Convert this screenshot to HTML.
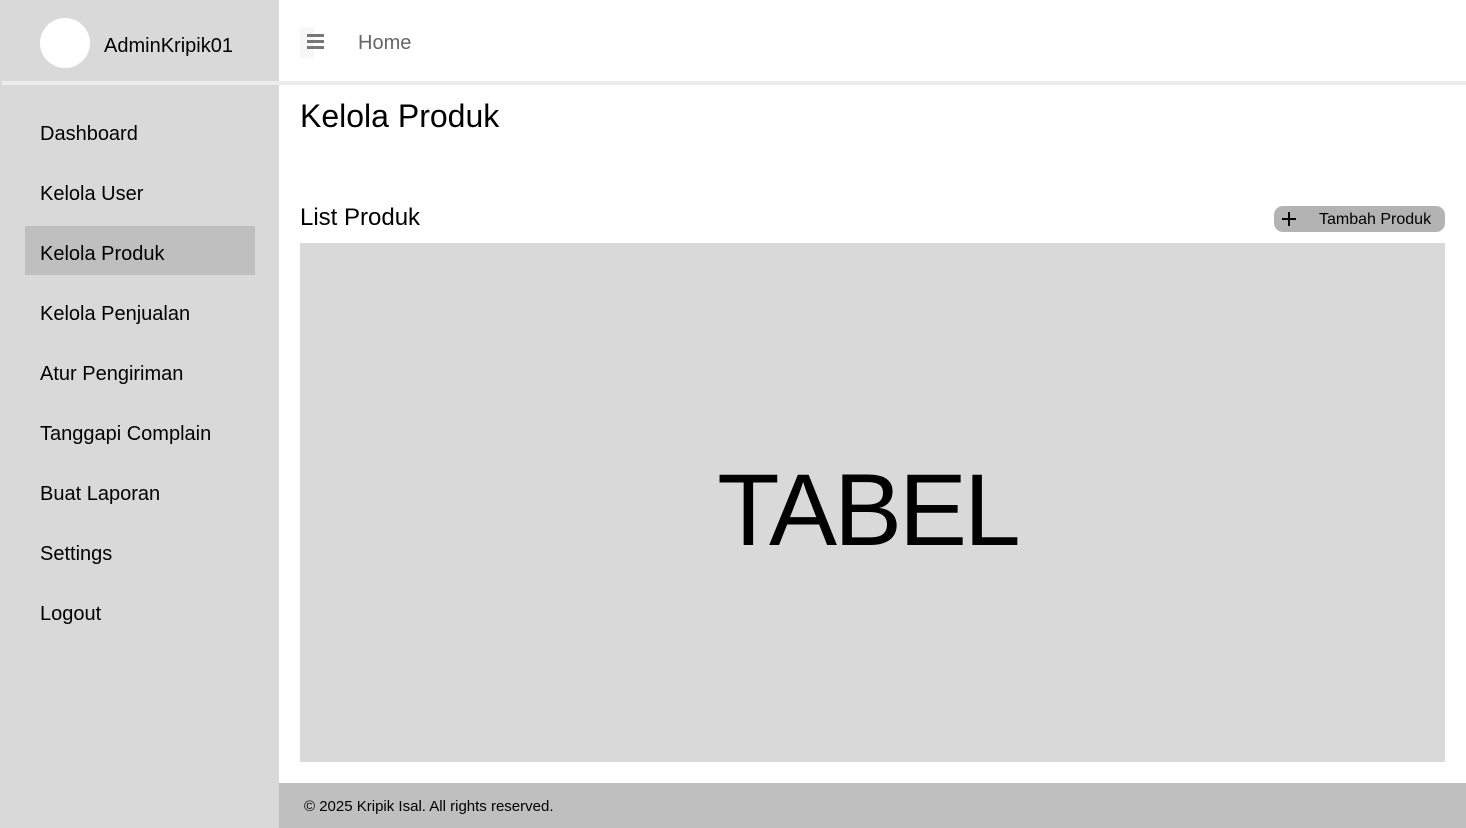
<!DOCTYPE html>
<html><head><style>
*{margin:0;padding:0;box-sizing:border-box}
body{width:1466px;height:828px;position:relative;background:#fff;font-family:"Liberation Sans",sans-serif;color:#000;overflow:hidden}
.sb{position:absolute;left:0;top:0;width:279px;height:828px;background:#d9d9d9}
.av{position:absolute;left:40px;top:18px;width:50px;height:50px;border-radius:50%;background:#fff}
.name{position:absolute;left:104px;top:35px;font-size:20px}
.sep{position:absolute;left:2px;top:81px;width:1464px;height:4px;background:#ececec}
.item{position:absolute;left:40px;font-size:20px}
.act{position:absolute;left:25px;top:226px;width:230px;height:49px;background:#bfbfbf}
.ham{position:absolute;left:300px;top:27px;width:14px;height:31px;background:#f7f7f7}
.ham i{position:absolute;left:7px;width:17px;height:3px;background:#777}
.home{position:absolute;left:358px;top:32px;font-size:20px;color:#666}
h1{position:absolute;left:300px;top:98px;font-size:32px;font-weight:normal}
.lp{position:absolute;left:300px;top:204px;font-size:24px}
.btn{position:absolute;left:1274px;top:206px;width:171px;height:26px;border-radius:9px;background:#b3b3b3;font-size:16px}
.btn span{position:absolute;left:45px;top:5px}
.tab{position:absolute;left:300px;top:243px;width:1145px;height:519px;background:#d9d9d9;text-align:center;font-size:102px;letter-spacing:-3px;line-height:519px;padding:8px 10px 0 0}
.ft{position:absolute;left:279px;top:783px;width:1187px;height:45px;background:#bfbfbf;font-size:15px;padding:15px 0 0 25px}
</style></head><body>
<div class="sb"></div>
<div class="av"></div>
<div class="name">AdminKripik01</div>
<div class="sep"></div>
<div class="act"></div>
<div class="item" style="top:123px">Dashboard</div>
<div class="item" style="top:183px">Kelola User</div>
<div class="item" style="top:243px">Kelola Produk</div>
<div class="item" style="top:303px">Kelola Penjualan</div>
<div class="item" style="top:363px">Atur Pengiriman</div>
<div class="item" style="top:423px">Tanggapi Complain</div>
<div class="item" style="top:483px">Buat Laporan</div>
<div class="item" style="top:543px">Settings</div>
<div class="item" style="top:603px">Logout</div>
<div class="ham"><i style="top:7px"></i><i style="top:13px"></i><i style="top:19px"></i></div>
<div class="home">Home</div>
<h1>Kelola Produk</h1>
<div class="lp">List Produk</div>
<div class="btn"><svg style="position:absolute;left:8px;top:6px" width="14" height="14"><path d="M7 0V14M0 7H14" stroke="#000" stroke-width="2"/></svg><span>Tambah Produk</span></div>
<div class="tab">TABEL</div>
<div class="ft">© 2025 Kripik Isal. All rights reserved.</div>
</body></html>
